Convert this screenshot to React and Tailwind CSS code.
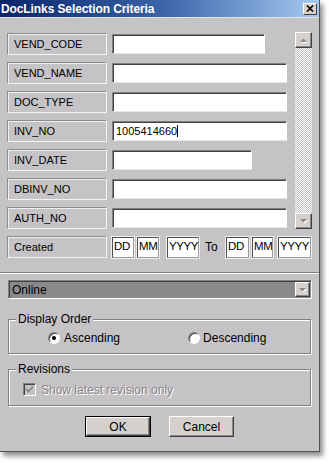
const FONT = "font-['Liberation_Sans',Arial,sans-serif]";

function Label({ children }) {
  return (
    <div className="w-[100px] h-[22px] shrink-0 flex items-center pl-[6px] border border-t-[#8e8b8e] border-l-[#8e8b8e] border-r-[#f4f4f4] border-b-[#f4f4f4] shadow-[inset_1px_1px_0_#eeeeee]">
      {children}
    </div>
  );
}

function Input({ w, value }) {
  return (
    <div
      className={`${w} h-[20px] ml-[5px] bg-white flex items-center pl-[3px] border border-t-[#808080] border-l-[#808080] border-r-white border-b-[#e6e6e6] shadow-[inset_1px_1px_0_#404040]`}
    >
      {value ? (
        <span className="flex items-center">
          {value}
          <span className="inline-block w-[1px] h-[12px] bg-black" />
        </span>
      ) : null}
    </div>
  );
}

function Row({ label, w, value }) {
  return (
    <div className="flex items-center">
      <Label>{label}</Label>
      <Input w={w} value={value} />
    </div>
  );
}

function DateBox({ w, text }) {
  return (
    <div
      className={`${w} h-[21px] bg-white flex items-center pl-[1px] overflow-hidden border border-t-[#505050] border-l-[#505050] border-r-[#9a9a9a] border-b-[#9a9a9a] outline outline-1 outline-[#f0f0f0] text-[11.5px] tracking-[-0.4px] leading-none`}
    >
      {text}
    </div>
  );
}

function ArrowUp() {
  return (
    <svg width="9" height="6" viewBox="0 0 9 6">
      <polygon points="1,5 8,5 4.5,1.5" fill="#ffffff" transform="translate(1,1)" />
      <polygon points="1,5 8,5 4.5,1.5" fill="#8a878a" />
    </svg>
  );
}

function ArrowDown() {
  return (
    <svg width="9" height="6" viewBox="0 0 9 6">
      <polygon points="1,1 8,1 4.5,4.5" fill="#ffffff" transform="translate(1,1)" />
      <polygon points="1,1 8,1 4.5,4.5" fill="#8a878a" />
    </svg>
  );
}

function RaisedBtn({ className, children }) {
  return (
    <div
      className={`bg-[#d4d0cc] flex items-center justify-center border border-t-white border-l-white border-r-[#404040] border-b-[#404040] shadow-[inset_-1px_-1px_0_#8a878a] ${className}`}
    >
      {children}
    </div>
  );
}

function Radio({ checked }) {
  return (
    <div className="w-[12px] h-[12px] rounded-full bg-white border border-t-[#808080] border-l-[#808080] border-r-white border-b-white shadow-[inset_1px_1px_0_#404040] flex items-center justify-center">
      {checked ? <div className="w-[4px] h-[4px] rounded-full bg-black" /> : null}
    </div>
  );
}

export default function App() {
  return (
    <div className={`w-[329px] h-[463px] bg-white ${FONT} text-[11px] text-black overflow-hidden`}>
      <div className="w-[320px] h-[452px] bg-[#c6c3c6] flex flex-col border-r border-b border-[#505050] shadow-[3px_4px_5px_rgba(0,0,0,0.45)]">
        {/* Title bar */}
        <div className="h-[17px] shrink-0 flex items-center justify-between bg-linear-to-r from-[#0a246a] via-[#3a63a8] to-[#a6caf0] pl-[1px] pr-[2px]">
          <span className="text-white font-bold text-[12px] leading-none tracking-[-0.1px]">
            DocLinks Selection Criteria
          </span>
          <div className="w-[14px] h-[12px] bg-[#d4d0c8] border border-t-white border-l-white border-r-[#404040] border-b-[#404040] flex items-center justify-center">
            <svg width="8" height="7" viewBox="0 0 8 7">
              <path d="M1 0.5 L7 6.5 M7 0.5 L1 6.5" stroke="#000" strokeWidth="1.6" />
            </svg>
          </div>
        </div>
        <div className="h-[1px] bg-[#e6e4e6]" />

        {/* Fields */}
        <div className="pl-[7px] pt-[15px]">
          <div className="flex">
            <div className="flex flex-col gap-[7px] w-[280px]">
              <Row label="VEND_CODE" w="w-[153px]" />
              <Row label="VEND_NAME" w="w-[175px]" />
              <Row label="DOC_TYPE" w="w-[175px]" />
              <Row label="INV_NO" w="w-[175px]" value="1005414660" />
              <Row label="INV_DATE" w="w-[140px]" />
              <Row label="DBINV_NO" w="w-[175px]" />
              <Row label="AUTH_NO" w="w-[175px]" />
            </div>
            {/* Scrollbar */}
            <div className="ml-[8px] mt-[-1px] w-[17px] flex flex-col">
              <RaisedBtn className="h-[16px] shrink-0">
                <ArrowUp />
              </RaisedBtn>
              <div className="flex-1 bg-[image:repeating-conic-gradient(#ffffff_0%_25%,#c6c3c6_0%_50%)] bg-[length:2px_2px]" />
              <RaisedBtn className="h-[16px] shrink-0">
                <ArrowDown />
              </RaisedBtn>
            </div>
          </div>
          {/* Created row */}
          <div className="mt-[7px] flex items-center">
            <Label>Created</Label>
            <div className="ml-[5px] flex items-center">
              <DateBox w="w-[22px]" text="DD" />
              <div className="ml-[3px]"><DateBox w="w-[22px]" text="MM" /></div>
              <div className="ml-[8px]"><DateBox w="w-[32px]" text="YYYY" /></div>
              <span className="ml-[6px] w-[21px] text-[12px]">To</span>
              <DateBox w="w-[23px]" text="DD" />
              <div className="ml-[3px]"><DateBox w="w-[21px]" text="MM" /></div>
              <div className="ml-[5px]"><DateBox w="w-[33px]" text="YYYY" /></div>
            </div>
          </div>
        </div>

        {/* Separator */}
        <div className="mt-[14px] h-[1px] bg-[#808080]" />
        <div className="h-[1px] bg-white" />

        {/* Combo */}
        <div className="mt-[6px] ml-[8px] w-[304px] h-[19px] bg-[#8c898c] flex items-center border border-t-[#808080] border-l-[#808080] border-r-white border-b-white shadow-[inset_1px_1px_0_#404040]">
          <span className="pl-[3px] flex-1 text-[12px]">Online</span>
          <RaisedBtn className="w-[15px] h-[15px] mr-[1px]">
            <ArrowDown />
          </RaisedBtn>
        </div>

        {/* Display Order */}
        <div className="relative mt-[20px] ml-[8px] w-[303px] h-[35px] border border-[#808080] shadow-[inset_1px_1px_0_#ffffff,1px_1px_0_#ffffff] flex items-center">
          <span className="absolute left-[7px] top-[-8px] px-[2px] bg-[#c6c3c6] leading-[14px] text-[12px]">
            Display Order
          </span>
          <div className="ml-[39px] mt-[2px] flex items-center">
            <Radio checked />
            <span className="ml-[4px] text-[12px]">Ascending</span>
          </div>
          <div className="ml-[68px] mt-[2px] flex items-center">
            <Radio />
            <span className="ml-[3px] text-[12px]">Descending</span>
          </div>
        </div>

        {/* Revisions */}
        <div className="relative mt-[15px] ml-[8px] w-[303px] h-[37px] border border-[#808080] shadow-[inset_1px_1px_0_#ffffff,1px_1px_0_#ffffff] flex items-center">
          <span className="absolute left-[7px] top-[-8px] px-[2px] bg-[#c6c3c6] leading-[14px] text-[12px]">
            Revisions
          </span>
          <div className="ml-[14px] mt-[4px] flex items-center">
            <div className="w-[13px] h-[13px] bg-[#c6c3c6] border border-t-[#808080] border-l-[#808080] border-r-white border-b-white shadow-[inset_1px_1px_0_#404040] flex items-center justify-center">
              <svg width="9" height="9" viewBox="0 0 9 9">
                <path d="M1 4 L3.5 6.5 L8 1.5" stroke="#8a878a" strokeWidth="1.8" fill="none" />
              </svg>
            </div>
            <span className="ml-[5px] text-[12px] text-[#8a878a] [text-shadow:1px_1px_0_#ffffff]">
              Show latest revision only
            </span>
          </div>
        </div>

        {/* Buttons */}
        <div className="mt-[10px] flex justify-center gap-[18px]">
          <div className="w-[66px] h-[21px] border border-black">
            <RaisedBtn className="w-full h-full text-[12px]">OK</RaisedBtn>
          </div>
          <RaisedBtn className="w-[65px] h-[21px] text-[12px]">Cancel</RaisedBtn>
        </div>
      </div>
    </div>
  );
}
